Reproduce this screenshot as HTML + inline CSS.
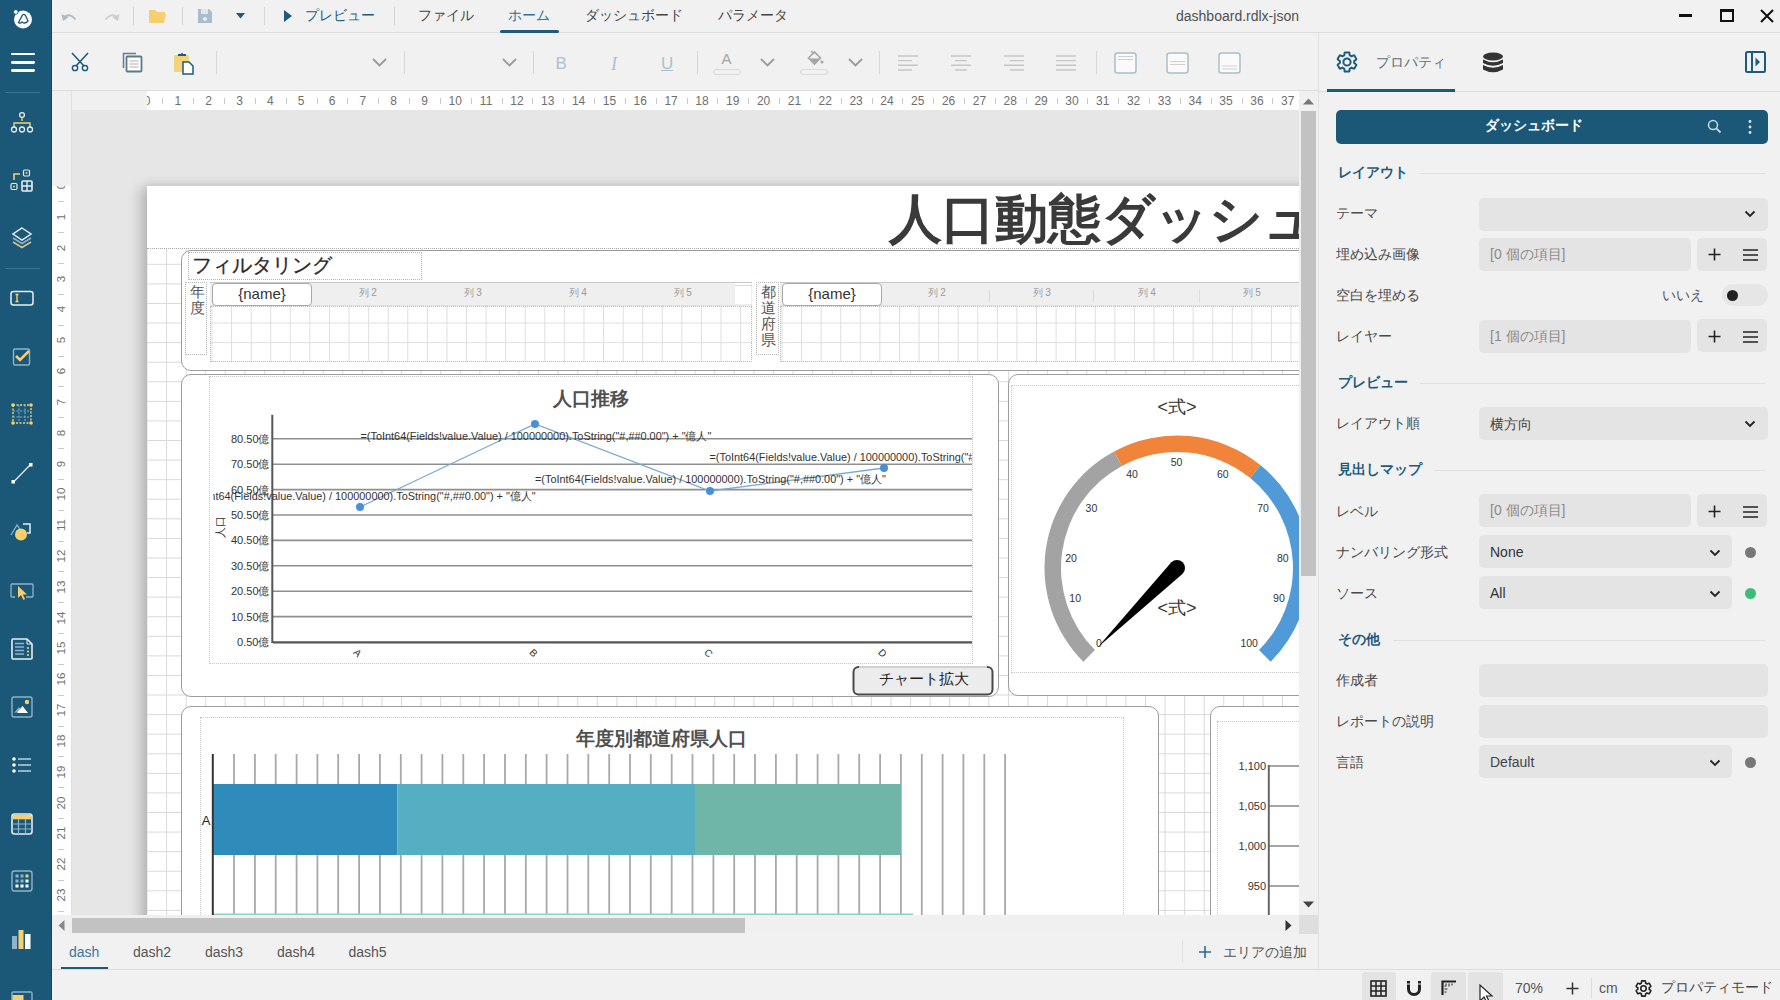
<!DOCTYPE html>
<html><head><meta charset="utf-8">
<style>
*{box-sizing:border-box}
html,body{margin:0;padding:0}
body{width:1780px;height:1000px;position:relative;overflow:hidden;background:#f1f1f1;font-family:"Liberation Sans",sans-serif;color:#444}
.a{position:absolute}
.t{position:absolute;white-space:nowrap;line-height:1}
svg{position:absolute;overflow:visible}
#side{left:0;top:0;width:52px;height:1000px;background:#1b5878}
.sep{position:absolute;width:1px;background:#d6d6d6}
.lbl{position:absolute;left:1336px;font-size:14px;color:#4a4a4a;white-space:nowrap;line-height:1}
.hdr{position:absolute;left:1338px;font-size:15px;font-weight:bold;color:#1d5b7b;white-space:nowrap;line-height:1}
.hline{position:absolute;height:1px;background:#dedede;right:14px}
.inp{position:absolute;left:1479px;height:33px;background:#e4e4e4;border-radius:5px}
.btns{position:absolute;left:1697px;width:70px;height:33px;background:#e4e4e4;border-radius:5px}
.ph{position:absolute;left:11px;top:9px;font-size:14px;color:#8a8a8a;white-space:nowrap;line-height:1}
.val{position:absolute;left:11px;top:10px;font-size:14px;color:#444;white-space:nowrap;line-height:1}
</style></head><body>

<!-- sidebar -->
<div id="side" class="a"></div>
<svg style="left:12px;top:8px" width="22" height="22" viewBox="0 0 22 22"><circle cx="11" cy="11.5" r="9" fill="#fff"/><circle cx="3.8" cy="4" r="2.3" fill="#fff" stroke="#1b5878" stroke-width="0.8"/><path d="M6.5 14.5 L10.5 7 Q12 5.5 13.5 7.5 L16 13 Q13 16.5 10 14 Q8 16 6.5 14.5z" fill="none" stroke="#1b5878" stroke-width="1.3"/></svg>
<div class="a" style="left:11px;top:52.5px;width:23.5px;height:2.8px;background:#fff;border-radius:1.4px"></div>
<div class="a" style="left:11px;top:61px;width:23.5px;height:2.8px;background:#fff;border-radius:1.4px"></div>
<div class="a" style="left:11px;top:69px;width:23.5px;height:2.8px;background:#fff;border-radius:1.4px"></div>
<div class="a" style="left:5.5px;top:91.5px;width:34.5px;height:1px;background:#3f7594"></div>
<div class="a" style="left:5.5px;top:267.5px;width:34.5px;height:1px;background:#3f7594"></div>
<svg style="left:9.0px;top:110.0px" width="26" height="26" viewBox="0 0 26 26"><path d="M13 7.5 V11 M5 17 V13 H21 V17" fill="none" stroke="#f7cf6e" stroke-width="1.4"/><circle cx="13" cy="5" r="2.4" fill="none" stroke="#e8eef2" stroke-width="1.3"/><circle cx="5" cy="19.5" r="2.5" fill="none" stroke="#e8eef2" stroke-width="1.3"/><circle cx="13" cy="19.5" r="2.5" fill="none" stroke="#e8eef2" stroke-width="1.3"/><circle cx="21" cy="19.5" r="2.5" fill="none" stroke="#e8eef2" stroke-width="1.3"/></svg>
<svg style="left:9.0px;top:168.0px" width="26" height="26" viewBox="0 0 26 26"><path d="M5 12 V6 H11" fill="none" stroke="#f7cf6e" stroke-width="1.6"/><rect x="14.5" y="2" width="6" height="6" rx="1.2" fill="none" stroke="#e8eef2" stroke-width="1.2"/><circle cx="17.5" cy="5" r="1" fill="#f7cf6e"/><rect x="2" y="15.5" width="6" height="6" rx="1.2" fill="none" stroke="#e8eef2" stroke-width="1.2"/><circle cx="5" cy="18.5" r="1" fill="#f7cf6e"/><rect x="13" y="13" width="10" height="10" rx="1" fill="none" stroke="#e8eef2" stroke-width="1.6"/><path d="M18 13v10M13 18h10" stroke="#e8eef2" stroke-width="1.4"/></svg>
<svg style="left:9.0px;top:225.0px" width="26" height="26" viewBox="0 0 26 26"><path d="M13 3 L22 9 L13 15 L4 9z" fill="none" stroke="#e8eef2" stroke-width="1.5"/><path d="M4 13 L13 18.5 L22 13" fill="none" stroke="#8fb3c8" stroke-width="1.5"/><path d="M4 17 L13 22.5 L22 17" fill="none" stroke="#d9c489" stroke-width="1.5"/></svg>
<svg style="left:9.0px;top:285.0px" width="26" height="26" viewBox="0 0 26 26"><rect x="2" y="6.5" width="22" height="13.5" rx="2.5" fill="none" stroke="#e8eef2" stroke-width="1.5"/><path d="M6.5 9.5h3M8 9.5v7M6.5 16.5h3" stroke="#f7cf6e" stroke-width="1.4"/></svg>
<svg style="left:9.0px;top:344.0px" width="26" height="26" viewBox="0 0 26 26"><rect x="4.5" y="5" width="16" height="16" rx="1.5" fill="none" stroke="#8fb3c8" stroke-width="1.4"/><path d="M7 12 L11 16 L20 7" fill="none" stroke="#f7cf6e" stroke-width="2.6"/></svg>
<svg style="left:9.0px;top:401.0px" width="26" height="26" viewBox="0 0 26 26"><rect x="4" y="4" width="18" height="18" fill="none" stroke="#f7cf6e" stroke-width="1.4" stroke-dasharray="2 1.5"/><path d="M10 4v18M16 4v18M4 10h18M4 16h18" stroke="#8fb3c8" stroke-width="1" stroke-dasharray="2 1.5"/><circle cx="4" cy="4" r="1.8" fill="#f7cf6e"/><circle cx="22" cy="4" r="1.8" fill="#f7cf6e"/><circle cx="4" cy="22" r="1.8" fill="#f7cf6e"/><circle cx="22" cy="22" r="1.8" fill="#f7cf6e"/></svg>
<svg style="left:9.0px;top:460.0px" width="26" height="26" viewBox="0 0 26 26"><path d="M4.5 22 L21.5 4.5" stroke="#e8eef2" stroke-width="1.2"/><rect x="2.5" y="20" width="3.5" height="3.5" fill="#fff"/><rect x="20" y="3" width="3.5" height="3.5" fill="#fff"/></svg>
<svg style="left:9.0px;top:518.0px" width="26" height="26" viewBox="0 0 26 26"><path d="M2 17 L8 7 L12 13" fill="none" stroke="#8fb3c8" stroke-width="1.3"/><path d="M14 6 H21 V15 H18" fill="none" stroke="#e8eef2" stroke-width="1.5"/><circle cx="12" cy="16.5" r="6" fill="#f7cf6e"/></svg>
<svg style="left:9.0px;top:577.0px" width="26" height="26" viewBox="0 0 26 26"><path d="M6 20 H3 Q2 20 2 19 V8 Q2 7 3 7 H23 Q24 7 24 8 V19 Q24 20 23 20 H17" fill="none" stroke="#8fb3c8" stroke-width="1.3"/><path d="M9 9 V21 L12 18 L14.5 23 L16 22 L13.8 17.5 H18z" fill="#f7cf6e"/></svg>
<svg style="left:9.0px;top:635.5px" width="26" height="26" viewBox="0 0 26 26"><path d="M3 4 Q3 3 4 3 H18 L23 8 V22 Q23 23 22 23 H4 Q3 23 3 22z" fill="none" stroke="#e8eef2" stroke-width="1.6"/><path d="M6 7.5h9M6 11h9M6 14.5h9M6 18h9" stroke="#8fb3c8" stroke-width="1.6"/><circle cx="19" cy="12" r="1.1" fill="#f7cf6e"/><circle cx="19" cy="15.5" r="1.1" fill="#f7cf6e"/><circle cx="19" cy="19" r="1.1" fill="#f7cf6e"/><path d="M18 3 V8 H23" fill="none" stroke="#e8eef2" stroke-width="1"/></svg>
<svg style="left:9.0px;top:693.5px" width="26" height="26" viewBox="0 0 26 26"><rect x="3" y="3" width="20" height="20" rx="2" fill="none" stroke="#8fb3c8" stroke-width="1.4"/><circle cx="18" cy="8" r="2.2" fill="#f7cf6e"/><path d="M5 19 L10 13 L13 17z" fill="#8fb3c8"/><path d="M8 19 L13.5 12 L19 19z" fill="#fff"/></svg>
<svg style="left:9.0px;top:752.0px" width="26" height="26" viewBox="0 0 26 26"><circle cx="5" cy="7" r="1.8" fill="#fff"/><circle cx="5" cy="13" r="1.8" fill="#fff"/><circle cx="5" cy="19" r="1.8" fill="#fff"/><path d="M9 7h13M9 13h13M9 19h13" stroke="#8fb3c8" stroke-width="1.8"/></svg>
<svg style="left:9.0px;top:810.5px" width="26" height="26" viewBox="0 0 26 26"><rect x="3" y="3" width="20" height="20" rx="2.5" fill="none" stroke="#e8eef2" stroke-width="1.6"/><rect x="3.8" y="3.8" width="18.4" height="4.5" fill="#f7cf6e"/><path d="M3 13h20M3 18h20M9.5 8v15M16.5 8v15" stroke="#8fb3c8" stroke-width="1.2"/></svg>
<svg style="left:9.0px;top:868.0px" width="26" height="26" viewBox="0 0 26 26"><rect x="3" y="3" width="20" height="20" rx="2.5" fill="none" stroke="#8fb3c8" stroke-width="1.4"/><g fill="#8fb3c8"><rect x="6.5" y="6.5" width="3" height="3"/><rect x="11.5" y="6.5" width="3" height="3"/><rect x="6.5" y="11.5" width="3" height="3"/><rect x="11.5" y="11.5" width="3" height="3"/></g><rect x="16.5" y="6.5" width="3" height="3" fill="#f7cf6e"/><g fill="#fff"><rect x="16.5" y="11.5" width="3" height="3"/><rect x="6.5" y="16.5" width="3" height="3"/><rect x="11.5" y="16.5" width="3" height="3"/><rect x="16.5" y="16.5" width="3" height="3"/></g></svg>
<svg style="left:9.0px;top:927.0px" width="26" height="26" viewBox="0 0 26 26"><rect x="3" y="9" width="5" height="13" fill="#8fb3c8"/><rect x="9.5" y="3" width="5" height="19" fill="#f7cf6e"/><rect x="16" y="7" width="5.5" height="15" fill="#fff"/></svg>
<svg style="left:9.0px;top:989px" width="26" height="26" viewBox="0 0 26 26"><rect x="3" y="3" width="20" height="20" rx="1" fill="none" stroke="#8fb3c8" stroke-width="1.4"/><rect x="3.5" y="6" width="11" height="10" fill="#f7cf6e"/></svg>
<div class="a" style="left:50.5px;top:0;width:1.5px;height:1000px;background:#1a4760"></div>

<!-- title bar -->
<div class="a" style="left:52px;top:0;width:1728px;height:33px;background:#f1f1f1;border-bottom:1px solid #dcdcdc"></div>

<!-- title bar content -->
<svg style="left:61px;top:11px" width="18" height="12" viewBox="0 0 18 12"><path d="M3.5 6 Q9 1.5 14.5 8.5" fill="none" stroke="#aabbc6" stroke-width="1.8"/><path d="M0.5 3 L2 10 L7.5 6.5Z" fill="#aabbc6"/></svg>
<svg style="left:102px;top:11px" width="18" height="12" viewBox="0 0 18 12"><path d="M14.5 6 Q9 1.5 3.5 8.5" fill="none" stroke="#c4ced5" stroke-width="1.8"/><path d="M17.5 3 L16 10 L10.5 6.5Z" fill="#c4ced5"/></svg>
<div class="sep" style="left:133px;top:7px;height:18px"></div>
<svg style="left:148px;top:8px" width="19" height="16" viewBox="0 0 19 16"><path d="M1 2 h6 l2 2 h8 v2 H1z" fill="#f6cf6f"/><path d="M1 6 h17 l-2 9 H1z" fill="#f6cf6f"/></svg>
<div class="sep" style="left:182px;top:7px;height:18px"></div>
<svg style="left:197px;top:8px" width="16" height="16" viewBox="0 0 16 16"><path d="M1 1 h11 l3 3 v11 H1z" fill="#a9bccb"/><rect x="4" y="1" width="7" height="5" fill="#dfe6ec"/><circle cx="8" cy="11" r="2" fill="#e9eef2"/></svg>
<svg style="left:236px;top:13px" width="9" height="6" viewBox="0 0 9 6"><path d="M0 0 H9 L4.5 5.5z" fill="#1d5b7b"/></svg>
<div class="sep" style="left:264px;top:7px;height:18px"></div>
<svg style="left:283px;top:9px" width="10" height="14" viewBox="0 0 10 14"><path d="M1 1 L9 7 L1 13z" fill="#1d5b7b"/></svg>
<div class="t" style="left:305px;top:7.5px;font-size:14.3px;color:#1d5b7b">プレビュー</div>
<div class="sep" style="left:394px;top:7px;height:18px"></div>
<div class="t" style="left:418px;top:7.5px;font-size:14.3px;color:#444">ファイル</div>
<div class="t" style="left:508px;top:7.5px;font-size:14.3px;color:#2e7396">ホーム</div>
<div class="a" style="left:500px;top:30px;width:59px;height:3px;background:#1d5b7b;border-radius:1.5px"></div>
<div class="t" style="left:585px;top:7.5px;font-size:14.3px;color:#444">ダッシュボード</div>
<div class="t" style="left:718px;top:7.5px;font-size:14.3px;color:#444">パラメータ</div>
<div class="t" style="left:1176px;top:9px;font-size:14px;color:#505050">dashboard.rdlx-json</div>
<div class="a" style="left:1679px;top:14px;width:13px;height:3px;background:#111"></div>
<div class="a" style="left:1720px;top:9px;width:14px;height:13px;border:2px solid #111;border-top-width:3px"></div>
<svg style="left:1760px;top:9px" width="14" height="14" viewBox="0 0 14 14"><path d="M1 1 L13 13 M13 1 L1 13" stroke="#111" stroke-width="2"/></svg>

<!-- toolbar -->
<div class="a" style="left:52px;top:33px;width:1266px;height:58px;background:#f1f1f1;border-bottom:1px solid #dcdcdc"></div>


<!-- toolbar content -->
<svg style="left:70px;top:52px" width="20" height="20" viewBox="0 0 20 20"><path d="M2 1 L14 14 M18 1 L6 14" stroke="#1d5b7b" stroke-width="1.6" fill="none"/><circle cx="5" cy="16" r="2.6" fill="#fff" stroke="#1d5b7b" stroke-width="1.5"/><circle cx="15" cy="16" r="2.6" fill="#fff" stroke="#1d5b7b" stroke-width="1.5"/></svg>
<svg style="left:122px;top:52px" width="22" height="22" viewBox="0 0 22 22"><path d="M1.5 16 V1.5 H14" stroke="#5f7f92" stroke-width="1.5" fill="none"/><rect x="4.5" y="4.5" width="15" height="15" rx="1" fill="#fff" stroke="#5a7a8e" stroke-width="1.8"/><path d="M7.5 9h9M7.5 12h9M7.5 15h9" stroke="#c9c9c9" stroke-width="1.3"/></svg>
<svg style="left:173px;top:51px" width="22" height="24" viewBox="0 0 22 24"><rect x="1" y="4" width="15" height="17" rx="1" fill="#f6d27a"/><path d="M5 5 V3 H8 Q9 0.5 10 3 H13 V5z" fill="#1d5b7b"/><path d="M10 11 H16 L20 15 V23 H10z" fill="#fff" stroke="#1d5b7b" stroke-width="1.5"/></svg>
<div class="sep" style="left:216px;top:51px;height:23px"></div>
<svg style="left:372px;top:58px" width="15" height="9" viewBox="0 0 15 9"><path d="M1 1 L7.5 7.5 L14 1" stroke="#9a9a9a" stroke-width="1.8" fill="none"/></svg>
<div class="sep" style="left:404px;top:51px;height:23px"></div>
<svg style="left:502px;top:58px" width="15" height="9" viewBox="0 0 15 9"><path d="M1 1 L7.5 7.5 L14 1" stroke="#9a9a9a" stroke-width="1.8" fill="none"/></svg>
<div class="sep" style="left:533px;top:51px;height:23px"></div>
<div class="t" style="left:555.5px;top:55px;font-size:17px;color:#a9c3cb;font-family:'Liberation Sans',sans-serif">B</div>
<div class="t" style="left:611px;top:55px;font-size:18px;color:#a9c3cb;font-style:italic;font-family:'Liberation Serif',serif">I</div>
<div class="t" style="left:661px;top:55px;font-size:17px;color:#a9c3cb;text-decoration:underline">U</div>
<div class="sep" style="left:697px;top:51px;height:23px"></div>
<div class="t" style="left:721.5px;top:51px;font-size:15px;color:#a5a5a5">A</div>
<div class="a" style="left:713px;top:69px;width:28px;height:6px;border:1px solid #dadada;border-radius:3px"></div>
<svg style="left:760px;top:58px" width="15" height="9" viewBox="0 0 15 9"><path d="M1 1 L7.5 7.5 L14 1" stroke="#9a9a9a" stroke-width="1.8" fill="none"/></svg>
<svg style="left:806px;top:49px" width="18" height="17" viewBox="0 0 18 17"><path d="M5 2 L8 5" stroke="#a5a5a5" stroke-width="1.4"/><path d="M2.5 9 L8.5 3 L14.5 9 L8.5 15z" fill="none" stroke="#a5a5a5" stroke-width="1.6"/><path d="M3.5 9.5 H13.5 L8.5 14.5z" fill="#a5a5a5"/><circle cx="16" cy="13" r="1.5" fill="#a5a5a5"/></svg>
<div class="a" style="left:800px;top:69px;width:28px;height:6px;border:1px solid #dadada;border-radius:3px"></div>
<svg style="left:848px;top:58px" width="15" height="9" viewBox="0 0 15 9"><path d="M1 1 L7.5 7.5 L14 1" stroke="#9a9a9a" stroke-width="1.8" fill="none"/></svg>
<div class="sep" style="left:879px;top:51px;height:23px"></div>
<svg style="left:897px;top:54px" width="22" height="18" viewBox="0 0 22 18"><path d="M1 2h20M1 6.6h14M1 11.2h20M1 16h14" stroke="#c6c6c6" stroke-width="1.4"/></svg>
<svg style="left:950px;top:54px" width="22" height="18" viewBox="0 0 22 18"><path d="M1 2h20M5 6.6h12M1 11.2h20M5 16h12" stroke="#c6c6c6" stroke-width="1.4"/></svg>
<svg style="left:1003px;top:54px" width="22" height="18" viewBox="0 0 22 18"><path d="M1 2h20M7 6.6h14M1 11.2h20M7 16h14" stroke="#c6c6c6" stroke-width="1.4"/></svg>
<svg style="left:1055px;top:54px" width="22" height="18" viewBox="0 0 22 18"><path d="M1 2h20M1 6.6h20M1 11.2h20M1 16h20" stroke="#c6c6c6" stroke-width="1.4"/></svg>
<div class="sep" style="left:1096px;top:51px;height:23px"></div>
<svg style="left:1114px;top:52px" width="23" height="22" viewBox="0 0 23 22"><rect x="1" y="1" width="21" height="20" rx="2.5" fill="#fafafa" stroke="#a9bfca" stroke-width="1.5"/><path d="M4 4.5h15M4 7.5h15" stroke="#cfcfcf" stroke-width="1.2"/></svg>
<svg style="left:1166px;top:52px" width="23" height="22" viewBox="0 0 23 22"><rect x="1" y="1" width="21" height="20" rx="2.5" fill="#fafafa" stroke="#a9bfca" stroke-width="1.5"/><path d="M4 9.5h15M4 12.5h15" stroke="#cfcfcf" stroke-width="1.2"/></svg>
<svg style="left:1218px;top:52px" width="23" height="22" viewBox="0 0 23 22"><rect x="1" y="1" width="21" height="20" rx="2.5" fill="#fafafa" stroke="#a9bfca" stroke-width="1.5"/><path d="M4 14h15M4 17h15" stroke="#cfcfcf" stroke-width="1.2"/></svg>

<!-- canvas region -->
<div class="a" id="canvas" style="left:52px;top:91px;width:1266px;height:825px;background:#e6e6e6;overflow:hidden"></div>

<!-- page -->
<div class="a" style="left:71px;top:110px;width:1227.5px;height:805px;overflow:hidden">
<div class="a" id="page" style="left:76px;top:76px;width:1400px;height:900px;background-color:#fff;box-shadow:-7px 2px 12px rgba(0,0,0,0.2),0 -3px 8px rgba(0,0,0,0.05);background-image:linear-gradient(to right,#d9d9d9 1px,transparent 1px),linear-gradient(to bottom,#d9d9d9 1px,transparent 1px);background-size:19.58px 19.58px;background-position:-0.5px -0.5px">
<div class="a" style="left:0;top:0;width:1400px;height:62.5px;background:#fff;border-bottom:1px dotted #aaa"></div>
<div class="t" style="left:742px;top:6px;font-size:53px;color:#3a3a3a;font-weight:bold">人口動態ダッシュボード</div>
<div class="a" style="left:33.5px;top:63.8px;width:1300px;height:121.5px;background:#fff;border:1.5px solid #9d9d9d;border-radius:10px"></div>
<div class="a" style="left:41px;top:66px;width:234px;height:28px;border:1px dotted #b5b5b5"></div>
<div class="t" style="left:45px;top:69px;font-size:20px;color:#2a2a2a;font-weight:normal;-webkit-text-stroke:0.3px #2a2a2a">フィルタリング</div>
<div class="a" style="left:38px;top:96px;width:22px;height:73px;border:1px dotted #b5b5b5"></div>
<div class="t" style="left:39px;top:97.5px;width:22px;text-align:center;font-size:15px;color:#555">年</div>
<div class="t" style="left:39px;top:113.5px;width:22px;text-align:center;font-size:15px;color:#555">度</div>
<div class="a" style="left:63px;top:120px;width:542px;height:56px;border:1px dotted #bbb;background-image:linear-gradient(to right,#dedede 1px,transparent 1px),linear-gradient(to bottom,#dedede 1px,transparent 1px);background-size:19.58px 19.58px;background-position:0.5px -4px"></div>
<div class="a" style="left:63px;top:96px;width:525px;height:24px;background:#efefef;border-top:1px solid #c8c8c8;border-bottom:1px solid #e0e0e0"></div><div class="a" style="left:588px;top:96px;width:17px;height:24px;border-top:1px solid #c8c8c8;background-image:linear-gradient(to right,#d9d9d9 1px,transparent 1px),linear-gradient(to bottom,#d9d9d9 1px,transparent 1px);background-size:19.58px 19.58px;background-position:-3px 2px"></div>
<div class="a" style="left:65px;top:97px;width:100px;height:23px;background:#fff;border:1px solid #a8a8a8;border-radius:4px"></div>
<div class="t" style="left:65px;top:100px;width:100px;text-align:center;font-size:15px;color:#333">{name}</div>
<div class="t" style="left:201px;top:102px;width:40px;text-align:center;font-size:10px;color:#9a9a9a">列<span style="margin-left:2px">2</span></div>
<div class="t" style="left:306px;top:102px;width:40px;text-align:center;font-size:10px;color:#9a9a9a">列<span style="margin-left:2px">3</span></div>
<div class="t" style="left:411px;top:102px;width:40px;text-align:center;font-size:10px;color:#9a9a9a">列<span style="margin-left:2px">4</span></div>
<div class="t" style="left:516px;top:102px;width:40px;text-align:center;font-size:10px;color:#9a9a9a">列<span style="margin-left:2px">5</span></div>
<div class="a" style="left:609px;top:96px;width:23px;height:73px;border:1px dotted #b5b5b5"></div>
<div class="t" style="left:610px;top:97.5px;width:23px;text-align:center;font-size:15px;color:#555">都</div>
<div class="t" style="left:610px;top:113.5px;width:23px;text-align:center;font-size:15px;color:#555">道</div>
<div class="t" style="left:610px;top:129.5px;width:23px;text-align:center;font-size:15px;color:#555">府</div>
<div class="t" style="left:610px;top:145.5px;width:23px;text-align:center;font-size:15px;color:#555">県</div>
<div class="a" style="left:633px;top:120px;width:540px;height:56px;border:1px dotted #bbb;background-image:linear-gradient(to right,#dedede 1px,transparent 1px),linear-gradient(to bottom,#dedede 1px,transparent 1px);background-size:19.58px 19.58px;background-position:0.5px -4px"></div>
<div class="a" style="left:633px;top:96px;width:540px;height:24px;background:#efefef;border-top:1px solid #c8c8c8;border-bottom:1px solid #e0e0e0"></div>
<div class="a" style="left:635px;top:97px;width:100px;height:23px;background:#fff;border:1px solid #a8a8a8;border-radius:4px"></div>
<div class="t" style="left:635px;top:100px;width:100px;text-align:center;font-size:15px;color:#333">{name}</div>
<div class="t" style="left:770px;top:102px;width:40px;text-align:center;font-size:10px;color:#9a9a9a">列<span style="margin-left:2px">2</span></div>
<div class="t" style="left:875px;top:102px;width:40px;text-align:center;font-size:10px;color:#9a9a9a">列<span style="margin-left:2px">3</span></div>
<div class="t" style="left:980px;top:102px;width:40px;text-align:center;font-size:10px;color:#9a9a9a">列<span style="margin-left:2px">4</span></div>
<div class="t" style="left:1085px;top:102px;width:40px;text-align:center;font-size:10px;color:#9a9a9a">列<span style="margin-left:2px">5</span></div>
<div class="a" style="left:33.5px;top:188px;width:818.5px;height:323px;background:#fff;border:1.5px solid #9d9d9d;border-radius:10px"></div>
<div class="a" style="left:62px;top:190px;width:764px;height:287.5px;border:1px dotted #c5c5c5"></div>
<div class="a" style="left:860.7px;top:188px;width:400px;height:322px;background:#fff;border:1.5px solid #9d9d9d;border-radius:10px"></div>
<div class="a" style="left:864px;top:198.5px;width:400px;height:288px;border:1px dotted #c5c5c5"></div>
<div class="a" style="left:33.5px;top:520.3px;width:978px;height:300px;background:#fff;border:1.5px solid #9d9d9d;border-radius:10px"></div>
<div class="a" style="left:52.5px;top:530.5px;width:924px;height:300px;border:1px dotted #c5c5c5"></div>
<div class="a" style="left:1062.6px;top:519.5px;width:400px;height:300px;background:#fff;border:1.5px solid #9d9d9d;border-radius:10px"></div>
<div class="a" style="left:1070px;top:535px;width:400px;height:300px;border:1px dotted #c5c5c5"></div>
<div class="a" style="left:842px;top:104px;width:1px;height:12px;background:#dcdcdc"></div>
<div class="a" style="left:946px;top:104px;width:1px;height:12px;background:#dcdcdc"></div>
<div class="a" style="left:1052px;top:104px;width:1px;height:12px;background:#dcdcdc"></div>
<!-- charts -->
<svg class="a" style="left:-147px;top:-186px" width="1780" height="1100" viewBox="0 0 1780 1100" font-family="Liberation Sans, sans-serif">
<text x="591" y="405" text-anchor="middle" font-size="19" font-weight="bold" fill="#505050">人口推移</text>
<line x1="273" y1="438.8" x2="972" y2="438.8" stroke="#8f8f8f" stroke-width="1.6"/>
<text x="269.5" y="442.8" text-anchor="end" font-size="11" fill="#333">80.50億</text>
<line x1="273" y1="464.2" x2="972" y2="464.2" stroke="#8f8f8f" stroke-width="1.6"/>
<text x="269.5" y="468.2" text-anchor="end" font-size="11" fill="#333">70.50億</text>
<line x1="273" y1="489.6" x2="972" y2="489.6" stroke="#8f8f8f" stroke-width="1.6"/>
<text x="269.5" y="493.6" text-anchor="end" font-size="11" fill="#333">60.50億</text>
<line x1="273" y1="515.0" x2="972" y2="515.0" stroke="#8f8f8f" stroke-width="1.6"/>
<text x="269.5" y="519.0" text-anchor="end" font-size="11" fill="#333">50.50億</text>
<line x1="273" y1="540.4" x2="972" y2="540.4" stroke="#8f8f8f" stroke-width="1.6"/>
<text x="269.5" y="544.4" text-anchor="end" font-size="11" fill="#333">40.50億</text>
<line x1="273" y1="565.8" x2="972" y2="565.8" stroke="#8f8f8f" stroke-width="1.6"/>
<text x="269.5" y="569.8" text-anchor="end" font-size="11" fill="#333">30.50億</text>
<line x1="273" y1="591.2" x2="972" y2="591.2" stroke="#8f8f8f" stroke-width="1.6"/>
<text x="269.5" y="595.2" text-anchor="end" font-size="11" fill="#333">20.50億</text>
<line x1="273" y1="616.6" x2="972" y2="616.6" stroke="#8f8f8f" stroke-width="1.6"/>
<text x="269.5" y="620.6" text-anchor="end" font-size="11" fill="#333">10.50億</text>
<line x1="273" y1="642.0" x2="972" y2="642.0" stroke="#8f8f8f" stroke-width="1.6"/>
<text x="269.5" y="646.0" text-anchor="end" font-size="11" fill="#333">0.50億</text>
<line x1="273" y1="642.4" x2="972" y2="642.4" stroke="#555" stroke-width="2"/>
<line x1="272.3" y1="414.8" x2="272.3" y2="643" stroke="#555" stroke-width="2"/>
<text transform="translate(224,527) rotate(-90)" text-anchor="middle" font-size="11" fill="#333">人口</text>
<text transform="translate(357.5,653) rotate(45)" text-anchor="middle" dominant-baseline="central" font-size="10" fill="#333">A</text>
<text transform="translate(533.5,653) rotate(45)" text-anchor="middle" dominant-baseline="central" font-size="10" fill="#333">B</text>
<text transform="translate(708.5,653) rotate(45)" text-anchor="middle" dominant-baseline="central" font-size="10" fill="#333">C</text>
<text transform="translate(882.5,653) rotate(45)" text-anchor="middle" dominant-baseline="central" font-size="10" fill="#333">D</text>
<polyline points="360,507 535,424 710,491 884,468" fill="none" stroke="#7aa8d4" stroke-width="1.3"/>
<circle cx="360" cy="507" r="4" fill="#4a90d9"/>
<circle cx="535" cy="424" r="4" fill="#4a90d9"/>
<circle cx="710" cy="491" r="4" fill="#4a90d9"/>
<circle cx="884" cy="468" r="4" fill="#4a90d9"/>
<defs><clipPath id="lc"><rect x="213" y="376" width="759" height="286"/></clipPath></defs>
<g clip-path="url(#lc)" font-size="10.9" fill="#333">
<text x="360.5" y="440" >=(ToInt64(Fields!value.Value) / 100000000).ToString(&quot;#,##0.00&quot;) + &quot;億人&quot;</text>
<text x="709.5" y="461" >=(ToInt64(Fields!value.Value) / 100000000).ToString(&quot;#,##0.00&quot;) + &quot;億人&quot;</text>
<text x="535" y="483" >=(ToInt64(Fields!value.Value) / 100000000).ToString(&quot;#,##0.00&quot;) + &quot;億人&quot;</text>
<text x="535.7" y="500" text-anchor="end">=(ToInt64(Fields!value.Value) / 100000000).ToString(&quot;#,##0.00&quot;) + &quot;億人&quot;</text>
</g>
<rect x="853.5" y="667" width="139" height="27.5" rx="5" fill="#ececec" stroke="#4a4a4a" stroke-width="2"/><rect x="859" y="666" width="128" height="3" fill="#ececec"/><line x1="859" y1="667" x2="987" y2="667" stroke="#c9c9c9" stroke-width="1.5"/>
<text x="923.5" y="683.5" text-anchor="middle" font-size="15" fill="#222">チャート拡大</text>
<text x="1177" y="413" text-anchor="middle" font-size="18" fill="#333">&lt;式&gt;</text>
<path d="M1083.31,661.69 A132.5,132.5 0 0 1 1114.08,451.39 L1121.92,465.91 A116,116 0 0 0 1094.98,650.02Z" fill="#a3a3a3"/>
<path d="M1114.08,451.39 A132.5,132.5 0 0 1 1260.65,465.25 L1250.24,478.04 A116,116 0 0 0 1121.92,465.91Z" fill="#f0843a"/>
<path d="M1260.65,465.25 A132.5,132.5 0 0 1 1270.69,661.69 L1259.02,650.02 A116,116 0 0 0 1250.24,478.04Z" fill="#519ad8"/>
<text x="1099" y="647.1" text-anchor="middle" font-size="10.5" fill="#333">0</text>
<text x="1075.2" y="601.5" text-anchor="middle" font-size="10.5" fill="#333">10</text>
<text x="1071" y="561.8" text-anchor="middle" font-size="10.5" fill="#333">20</text>
<text x="1091.4" y="512.4" text-anchor="middle" font-size="10.5" fill="#333">30</text>
<text x="1132" y="477.8" text-anchor="middle" font-size="10.5" fill="#333">40</text>
<text x="1176.6" y="465.5" text-anchor="middle" font-size="10.5" fill="#333">50</text>
<text x="1222.8" y="477.8" text-anchor="middle" font-size="10.5" fill="#333">60</text>
<text x="1263" y="512.4" text-anchor="middle" font-size="10.5" fill="#333">70</text>
<text x="1282.8" y="561.8" text-anchor="middle" font-size="10.5" fill="#333">80</text>
<text x="1278.9" y="601.5" text-anchor="middle" font-size="10.5" fill="#333">90</text>
<text x="1249.2" y="647.1" text-anchor="middle" font-size="10.5" fill="#333">100</text>
<path d="M1097.5,647.5 L1171.34,562.34 A8,8 0 0 1 1182.66,573.66 Z" fill="#000"/>
<text x="1177" y="614" text-anchor="middle" font-size="18" fill="#333">&lt;式&gt;</text>
<text x="661" y="745" text-anchor="middle" font-size="19" font-weight="bold" fill="#505050">年度別都道府県人口</text>
<line x1="234.0" y1="754" x2="234.0" y2="915" stroke="#a8a8a8" stroke-width="1.8"/>
<line x1="254.9" y1="754" x2="254.9" y2="915" stroke="#a8a8a8" stroke-width="1.8"/>
<line x1="275.7" y1="754" x2="275.7" y2="915" stroke="#a8a8a8" stroke-width="1.8"/>
<line x1="296.6" y1="754" x2="296.6" y2="915" stroke="#a8a8a8" stroke-width="1.8"/>
<line x1="317.4" y1="754" x2="317.4" y2="915" stroke="#a8a8a8" stroke-width="1.8"/>
<line x1="338.2" y1="754" x2="338.2" y2="915" stroke="#a8a8a8" stroke-width="1.8"/>
<line x1="359.1" y1="754" x2="359.1" y2="915" stroke="#a8a8a8" stroke-width="1.8"/>
<line x1="379.9" y1="754" x2="379.9" y2="915" stroke="#a8a8a8" stroke-width="1.8"/>
<line x1="400.8" y1="754" x2="400.8" y2="915" stroke="#a8a8a8" stroke-width="1.8"/>
<line x1="421.6" y1="754" x2="421.6" y2="915" stroke="#a8a8a8" stroke-width="1.8"/>
<line x1="442.4" y1="754" x2="442.4" y2="915" stroke="#a8a8a8" stroke-width="1.8"/>
<line x1="463.3" y1="754" x2="463.3" y2="915" stroke="#a8a8a8" stroke-width="1.8"/>
<line x1="484.1" y1="754" x2="484.1" y2="915" stroke="#a8a8a8" stroke-width="1.8"/>
<line x1="505.0" y1="754" x2="505.0" y2="915" stroke="#a8a8a8" stroke-width="1.8"/>
<line x1="525.8" y1="754" x2="525.8" y2="915" stroke="#a8a8a8" stroke-width="1.8"/>
<line x1="546.6" y1="754" x2="546.6" y2="915" stroke="#a8a8a8" stroke-width="1.8"/>
<line x1="567.5" y1="754" x2="567.5" y2="915" stroke="#a8a8a8" stroke-width="1.8"/>
<line x1="588.3" y1="754" x2="588.3" y2="915" stroke="#a8a8a8" stroke-width="1.8"/>
<line x1="609.2" y1="754" x2="609.2" y2="915" stroke="#a8a8a8" stroke-width="1.8"/>
<line x1="630.0" y1="754" x2="630.0" y2="915" stroke="#a8a8a8" stroke-width="1.8"/>
<line x1="650.8" y1="754" x2="650.8" y2="915" stroke="#a8a8a8" stroke-width="1.8"/>
<line x1="671.7" y1="754" x2="671.7" y2="915" stroke="#a8a8a8" stroke-width="1.8"/>
<line x1="692.5" y1="754" x2="692.5" y2="915" stroke="#a8a8a8" stroke-width="1.8"/>
<line x1="713.4" y1="754" x2="713.4" y2="915" stroke="#a8a8a8" stroke-width="1.8"/>
<line x1="734.2" y1="754" x2="734.2" y2="915" stroke="#a8a8a8" stroke-width="1.8"/>
<line x1="755.0" y1="754" x2="755.0" y2="915" stroke="#a8a8a8" stroke-width="1.8"/>
<line x1="775.9" y1="754" x2="775.9" y2="915" stroke="#a8a8a8" stroke-width="1.8"/>
<line x1="796.7" y1="754" x2="796.7" y2="915" stroke="#a8a8a8" stroke-width="1.8"/>
<line x1="817.6" y1="754" x2="817.6" y2="915" stroke="#a8a8a8" stroke-width="1.8"/>
<line x1="838.4" y1="754" x2="838.4" y2="915" stroke="#a8a8a8" stroke-width="1.8"/>
<line x1="859.2" y1="754" x2="859.2" y2="915" stroke="#a8a8a8" stroke-width="1.8"/>
<line x1="880.1" y1="754" x2="880.1" y2="915" stroke="#a8a8a8" stroke-width="1.8"/>
<line x1="900.9" y1="754" x2="900.9" y2="915" stroke="#a8a8a8" stroke-width="1.8"/>
<line x1="921.8" y1="754" x2="921.8" y2="915" stroke="#a8a8a8" stroke-width="1.8"/>
<line x1="942.6" y1="754" x2="942.6" y2="915" stroke="#a8a8a8" stroke-width="1.8"/>
<line x1="963.4" y1="754" x2="963.4" y2="915" stroke="#a8a8a8" stroke-width="1.8"/>
<line x1="984.3" y1="754" x2="984.3" y2="915" stroke="#a8a8a8" stroke-width="1.8"/>
<line x1="1005.1" y1="754" x2="1005.1" y2="915" stroke="#a8a8a8" stroke-width="1.8"/>
<rect x="213" y="784" width="184.5" height="71" fill="#2e8bba"/>
<rect x="397.5" y="784" width="297.5" height="71" fill="#55aec2"/>
<rect x="695" y="784" width="205.8" height="71" fill="#6fb5a8"/>
<rect x="213" y="913.5" width="700" height="3" fill="#8fd0c8"/>
<line x1="212.8" y1="754" x2="212.8" y2="915" stroke="#333" stroke-width="2"/>
<text x="206" y="825" text-anchor="middle" font-size="13" fill="#222">A</text>
<text x="1266" y="770" text-anchor="end" font-size="11" fill="#333">1,100</text>
<line x1="1269" y1="766" x2="1300" y2="766" stroke="#8f8f8f" stroke-width="1.6"/>
<text x="1266" y="810" text-anchor="end" font-size="11" fill="#333">1,050</text>
<line x1="1269" y1="806" x2="1300" y2="806" stroke="#8f8f8f" stroke-width="1.6"/>
<text x="1266" y="850" text-anchor="end" font-size="11" fill="#333">1,000</text>
<line x1="1269" y1="846" x2="1300" y2="846" stroke="#8f8f8f" stroke-width="1.6"/>
<text x="1266" y="890" text-anchor="end" font-size="11" fill="#333">950</text>
<line x1="1269" y1="886" x2="1300" y2="886" stroke="#8f8f8f" stroke-width="1.6"/>
<line x1="1268.8" y1="765" x2="1268.8" y2="915" stroke="#666" stroke-width="2"/>
</svg>

</div></div>
<!-- rulers -->
<div class="a" style="left:52px;top:91px;width:1246px;height:19px;background:#f0f0f0"></div>
<div class="a" style="left:71px;top:91px;width:1px;height:824px;background:#e0e0e0"></div><div class="a" style="left:52px;top:109.5px;width:19px;height:1px;background:#e0e0e0"></div>
<div class="a" style="left:52px;top:110px;width:19px;height:805px;background:#f0f0f0"></div>
<div class="a" style="left:147px;top:91px;width:1151.5px;height:19px;background:#fff;overflow:hidden" id="hr">
<div class="t" style="left:-10.0px;top:4px;width:20px;text-align:center;font-size:12px;color:#6f6f6f">0</div>
<div class="a" style="left:15.4px;top:7px;width:1px;height:6px;background:#c9c9c9"></div>
<div class="t" style="left:20.8px;top:4px;width:20px;text-align:center;font-size:12px;color:#6f6f6f">1</div>
<div class="a" style="left:46.2px;top:7px;width:1px;height:6px;background:#c9c9c9"></div>
<div class="t" style="left:51.7px;top:4px;width:20px;text-align:center;font-size:12px;color:#6f6f6f">2</div>
<div class="a" style="left:77.1px;top:7px;width:1px;height:6px;background:#c9c9c9"></div>
<div class="t" style="left:82.5px;top:4px;width:20px;text-align:center;font-size:12px;color:#6f6f6f">3</div>
<div class="a" style="left:107.9px;top:7px;width:1px;height:6px;background:#c9c9c9"></div>
<div class="t" style="left:113.3px;top:4px;width:20px;text-align:center;font-size:12px;color:#6f6f6f">4</div>
<div class="a" style="left:138.7px;top:7px;width:1px;height:6px;background:#c9c9c9"></div>
<div class="t" style="left:144.1px;top:4px;width:20px;text-align:center;font-size:12px;color:#6f6f6f">5</div>
<div class="a" style="left:169.6px;top:7px;width:1px;height:6px;background:#c9c9c9"></div>
<div class="t" style="left:175.0px;top:4px;width:20px;text-align:center;font-size:12px;color:#6f6f6f">6</div>
<div class="a" style="left:200.4px;top:7px;width:1px;height:6px;background:#c9c9c9"></div>
<div class="t" style="left:205.8px;top:4px;width:20px;text-align:center;font-size:12px;color:#6f6f6f">7</div>
<div class="a" style="left:231.2px;top:7px;width:1px;height:6px;background:#c9c9c9"></div>
<div class="t" style="left:236.6px;top:4px;width:20px;text-align:center;font-size:12px;color:#6f6f6f">8</div>
<div class="a" style="left:262.1px;top:7px;width:1px;height:6px;background:#c9c9c9"></div>
<div class="t" style="left:267.5px;top:4px;width:20px;text-align:center;font-size:12px;color:#6f6f6f">9</div>
<div class="a" style="left:292.9px;top:7px;width:1px;height:6px;background:#c9c9c9"></div>
<div class="t" style="left:298.3px;top:4px;width:20px;text-align:center;font-size:12px;color:#6f6f6f">10</div>
<div class="a" style="left:323.7px;top:7px;width:1px;height:6px;background:#c9c9c9"></div>
<div class="t" style="left:329.1px;top:4px;width:20px;text-align:center;font-size:12px;color:#6f6f6f">11</div>
<div class="a" style="left:354.5px;top:7px;width:1px;height:6px;background:#c9c9c9"></div>
<div class="t" style="left:360.0px;top:4px;width:20px;text-align:center;font-size:12px;color:#6f6f6f">12</div>
<div class="a" style="left:385.4px;top:7px;width:1px;height:6px;background:#c9c9c9"></div>
<div class="t" style="left:390.8px;top:4px;width:20px;text-align:center;font-size:12px;color:#6f6f6f">13</div>
<div class="a" style="left:416.2px;top:7px;width:1px;height:6px;background:#c9c9c9"></div>
<div class="t" style="left:421.6px;top:4px;width:20px;text-align:center;font-size:12px;color:#6f6f6f">14</div>
<div class="a" style="left:447.0px;top:7px;width:1px;height:6px;background:#c9c9c9"></div>
<div class="t" style="left:452.4px;top:4px;width:20px;text-align:center;font-size:12px;color:#6f6f6f">15</div>
<div class="a" style="left:477.9px;top:7px;width:1px;height:6px;background:#c9c9c9"></div>
<div class="t" style="left:483.3px;top:4px;width:20px;text-align:center;font-size:12px;color:#6f6f6f">16</div>
<div class="a" style="left:508.7px;top:7px;width:1px;height:6px;background:#c9c9c9"></div>
<div class="t" style="left:514.1px;top:4px;width:20px;text-align:center;font-size:12px;color:#6f6f6f">17</div>
<div class="a" style="left:539.5px;top:7px;width:1px;height:6px;background:#c9c9c9"></div>
<div class="t" style="left:544.9px;top:4px;width:20px;text-align:center;font-size:12px;color:#6f6f6f">18</div>
<div class="a" style="left:570.4px;top:7px;width:1px;height:6px;background:#c9c9c9"></div>
<div class="t" style="left:575.8px;top:4px;width:20px;text-align:center;font-size:12px;color:#6f6f6f">19</div>
<div class="a" style="left:601.2px;top:7px;width:1px;height:6px;background:#c9c9c9"></div>
<div class="t" style="left:606.6px;top:4px;width:20px;text-align:center;font-size:12px;color:#6f6f6f">20</div>
<div class="a" style="left:632.0px;top:7px;width:1px;height:6px;background:#c9c9c9"></div>
<div class="t" style="left:637.4px;top:4px;width:20px;text-align:center;font-size:12px;color:#6f6f6f">21</div>
<div class="a" style="left:662.8px;top:7px;width:1px;height:6px;background:#c9c9c9"></div>
<div class="t" style="left:668.3px;top:4px;width:20px;text-align:center;font-size:12px;color:#6f6f6f">22</div>
<div class="a" style="left:693.7px;top:7px;width:1px;height:6px;background:#c9c9c9"></div>
<div class="t" style="left:699.1px;top:4px;width:20px;text-align:center;font-size:12px;color:#6f6f6f">23</div>
<div class="a" style="left:724.5px;top:7px;width:1px;height:6px;background:#c9c9c9"></div>
<div class="t" style="left:729.9px;top:4px;width:20px;text-align:center;font-size:12px;color:#6f6f6f">24</div>
<div class="a" style="left:755.3px;top:7px;width:1px;height:6px;background:#c9c9c9"></div>
<div class="t" style="left:760.8px;top:4px;width:20px;text-align:center;font-size:12px;color:#6f6f6f">25</div>
<div class="a" style="left:786.2px;top:7px;width:1px;height:6px;background:#c9c9c9"></div>
<div class="t" style="left:791.6px;top:4px;width:20px;text-align:center;font-size:12px;color:#6f6f6f">26</div>
<div class="a" style="left:817.0px;top:7px;width:1px;height:6px;background:#c9c9c9"></div>
<div class="t" style="left:822.4px;top:4px;width:20px;text-align:center;font-size:12px;color:#6f6f6f">27</div>
<div class="a" style="left:847.8px;top:7px;width:1px;height:6px;background:#c9c9c9"></div>
<div class="t" style="left:853.2px;top:4px;width:20px;text-align:center;font-size:12px;color:#6f6f6f">28</div>
<div class="a" style="left:878.7px;top:7px;width:1px;height:6px;background:#c9c9c9"></div>
<div class="t" style="left:884.1px;top:4px;width:20px;text-align:center;font-size:12px;color:#6f6f6f">29</div>
<div class="a" style="left:909.5px;top:7px;width:1px;height:6px;background:#c9c9c9"></div>
<div class="t" style="left:914.9px;top:4px;width:20px;text-align:center;font-size:12px;color:#6f6f6f">30</div>
<div class="a" style="left:940.3px;top:7px;width:1px;height:6px;background:#c9c9c9"></div>
<div class="t" style="left:945.7px;top:4px;width:20px;text-align:center;font-size:12px;color:#6f6f6f">31</div>
<div class="a" style="left:971.1px;top:7px;width:1px;height:6px;background:#c9c9c9"></div>
<div class="t" style="left:976.6px;top:4px;width:20px;text-align:center;font-size:12px;color:#6f6f6f">32</div>
<div class="a" style="left:1002.0px;top:7px;width:1px;height:6px;background:#c9c9c9"></div>
<div class="t" style="left:1007.4px;top:4px;width:20px;text-align:center;font-size:12px;color:#6f6f6f">33</div>
<div class="a" style="left:1032.8px;top:7px;width:1px;height:6px;background:#c9c9c9"></div>
<div class="t" style="left:1038.2px;top:4px;width:20px;text-align:center;font-size:12px;color:#6f6f6f">34</div>
<div class="a" style="left:1063.6px;top:7px;width:1px;height:6px;background:#c9c9c9"></div>
<div class="t" style="left:1069.0px;top:4px;width:20px;text-align:center;font-size:12px;color:#6f6f6f">35</div>
<div class="a" style="left:1094.5px;top:7px;width:1px;height:6px;background:#c9c9c9"></div>
<div class="t" style="left:1099.9px;top:4px;width:20px;text-align:center;font-size:12px;color:#6f6f6f">36</div>
<div class="a" style="left:1125.3px;top:7px;width:1px;height:6px;background:#c9c9c9"></div>
<div class="t" style="left:1130.7px;top:4px;width:20px;text-align:center;font-size:12px;color:#6f6f6f">37</div>
<div class="a" style="left:1156.1px;top:7px;width:1px;height:6px;background:#c9c9c9"></div>
</div>
<div class="a" style="left:52px;top:186px;width:19px;height:729px;background:#fff;overflow:hidden" id="vr">
<div class="t" style="left:0px;top:-6.0px;width:20px;height:12px;text-align:center;font-size:11.5px;color:#6f6f6f;transform:rotate(-90deg)">0</div>
<div class="a" style="left:6px;top:15.4px;width:6px;height:1px;background:#c9c9c9"></div>
<div class="t" style="left:0px;top:24.8px;width:20px;height:12px;text-align:center;font-size:11.5px;color:#6f6f6f;transform:rotate(-90deg)">1</div>
<div class="a" style="left:6px;top:46.2px;width:6px;height:1px;background:#c9c9c9"></div>
<div class="t" style="left:0px;top:55.7px;width:20px;height:12px;text-align:center;font-size:11.5px;color:#6f6f6f;transform:rotate(-90deg)">2</div>
<div class="a" style="left:6px;top:77.1px;width:6px;height:1px;background:#c9c9c9"></div>
<div class="t" style="left:0px;top:86.5px;width:20px;height:12px;text-align:center;font-size:11.5px;color:#6f6f6f;transform:rotate(-90deg)">3</div>
<div class="a" style="left:6px;top:107.9px;width:6px;height:1px;background:#c9c9c9"></div>
<div class="t" style="left:0px;top:117.3px;width:20px;height:12px;text-align:center;font-size:11.5px;color:#6f6f6f;transform:rotate(-90deg)">4</div>
<div class="a" style="left:6px;top:138.7px;width:6px;height:1px;background:#c9c9c9"></div>
<div class="t" style="left:0px;top:148.1px;width:20px;height:12px;text-align:center;font-size:11.5px;color:#6f6f6f;transform:rotate(-90deg)">5</div>
<div class="a" style="left:6px;top:169.6px;width:6px;height:1px;background:#c9c9c9"></div>
<div class="t" style="left:0px;top:179.0px;width:20px;height:12px;text-align:center;font-size:11.5px;color:#6f6f6f;transform:rotate(-90deg)">6</div>
<div class="a" style="left:6px;top:200.4px;width:6px;height:1px;background:#c9c9c9"></div>
<div class="t" style="left:0px;top:209.8px;width:20px;height:12px;text-align:center;font-size:11.5px;color:#6f6f6f;transform:rotate(-90deg)">7</div>
<div class="a" style="left:6px;top:231.2px;width:6px;height:1px;background:#c9c9c9"></div>
<div class="t" style="left:0px;top:240.6px;width:20px;height:12px;text-align:center;font-size:11.5px;color:#6f6f6f;transform:rotate(-90deg)">8</div>
<div class="a" style="left:6px;top:262.1px;width:6px;height:1px;background:#c9c9c9"></div>
<div class="t" style="left:0px;top:271.5px;width:20px;height:12px;text-align:center;font-size:11.5px;color:#6f6f6f;transform:rotate(-90deg)">9</div>
<div class="a" style="left:6px;top:292.9px;width:6px;height:1px;background:#c9c9c9"></div>
<div class="t" style="left:0px;top:302.3px;width:20px;height:12px;text-align:center;font-size:11.5px;color:#6f6f6f;transform:rotate(-90deg)">10</div>
<div class="a" style="left:6px;top:323.7px;width:6px;height:1px;background:#c9c9c9"></div>
<div class="t" style="left:0px;top:333.1px;width:20px;height:12px;text-align:center;font-size:11.5px;color:#6f6f6f;transform:rotate(-90deg)">11</div>
<div class="a" style="left:6px;top:354.5px;width:6px;height:1px;background:#c9c9c9"></div>
<div class="t" style="left:0px;top:364.0px;width:20px;height:12px;text-align:center;font-size:11.5px;color:#6f6f6f;transform:rotate(-90deg)">12</div>
<div class="a" style="left:6px;top:385.4px;width:6px;height:1px;background:#c9c9c9"></div>
<div class="t" style="left:0px;top:394.8px;width:20px;height:12px;text-align:center;font-size:11.5px;color:#6f6f6f;transform:rotate(-90deg)">13</div>
<div class="a" style="left:6px;top:416.2px;width:6px;height:1px;background:#c9c9c9"></div>
<div class="t" style="left:0px;top:425.6px;width:20px;height:12px;text-align:center;font-size:11.5px;color:#6f6f6f;transform:rotate(-90deg)">14</div>
<div class="a" style="left:6px;top:447.0px;width:6px;height:1px;background:#c9c9c9"></div>
<div class="t" style="left:0px;top:456.4px;width:20px;height:12px;text-align:center;font-size:11.5px;color:#6f6f6f;transform:rotate(-90deg)">15</div>
<div class="a" style="left:6px;top:477.9px;width:6px;height:1px;background:#c9c9c9"></div>
<div class="t" style="left:0px;top:487.3px;width:20px;height:12px;text-align:center;font-size:11.5px;color:#6f6f6f;transform:rotate(-90deg)">16</div>
<div class="a" style="left:6px;top:508.7px;width:6px;height:1px;background:#c9c9c9"></div>
<div class="t" style="left:0px;top:518.1px;width:20px;height:12px;text-align:center;font-size:11.5px;color:#6f6f6f;transform:rotate(-90deg)">17</div>
<div class="a" style="left:6px;top:539.5px;width:6px;height:1px;background:#c9c9c9"></div>
<div class="t" style="left:0px;top:548.9px;width:20px;height:12px;text-align:center;font-size:11.5px;color:#6f6f6f;transform:rotate(-90deg)">18</div>
<div class="a" style="left:6px;top:570.4px;width:6px;height:1px;background:#c9c9c9"></div>
<div class="t" style="left:0px;top:579.8px;width:20px;height:12px;text-align:center;font-size:11.5px;color:#6f6f6f;transform:rotate(-90deg)">19</div>
<div class="a" style="left:6px;top:601.2px;width:6px;height:1px;background:#c9c9c9"></div>
<div class="t" style="left:0px;top:610.6px;width:20px;height:12px;text-align:center;font-size:11.5px;color:#6f6f6f;transform:rotate(-90deg)">20</div>
<div class="a" style="left:6px;top:632.0px;width:6px;height:1px;background:#c9c9c9"></div>
<div class="t" style="left:0px;top:641.4px;width:20px;height:12px;text-align:center;font-size:11.5px;color:#6f6f6f;transform:rotate(-90deg)">21</div>
<div class="a" style="left:6px;top:662.8px;width:6px;height:1px;background:#c9c9c9"></div>
<div class="t" style="left:0px;top:672.3px;width:20px;height:12px;text-align:center;font-size:11.5px;color:#6f6f6f;transform:rotate(-90deg)">22</div>
<div class="a" style="left:6px;top:693.7px;width:6px;height:1px;background:#c9c9c9"></div>
<div class="t" style="left:0px;top:703.1px;width:20px;height:12px;text-align:center;font-size:11.5px;color:#6f6f6f;transform:rotate(-90deg)">23</div>
<div class="a" style="left:6px;top:724.5px;width:6px;height:1px;background:#c9c9c9"></div>
<div class="t" style="left:0px;top:733.9px;width:20px;height:12px;text-align:center;font-size:11.5px;color:#6f6f6f;transform:rotate(-90deg)">24</div>
<div class="a" style="left:6px;top:755.3px;width:6px;height:1px;background:#c9c9c9"></div>
</div>
<div class="a" style="left:1298.5px;top:91px;width:19.5px;height:824px;background:#f0f0f0"></div>
<svg style="left:1303px;top:98px" width="11" height="7" viewBox="0 0 11 7"><path d="M0 6.5 L5.5 0.5 L11 6.5z" fill="#777"/></svg>
<div class="a" style="left:1300.5px;top:111px;width:15.5px;height:465px;background:#c2c2c2"></div>
<svg style="left:1303px;top:901px" width="11" height="7" viewBox="0 0 11 7"><path d="M0 0.5 L5.5 6.5 L11 0.5z" fill="#444"/></svg>
<div class="a" style="left:52px;top:915px;width:1246.5px;height:20px;background:#f0f0f0"></div>
<svg style="left:58px;top:920px" width="7" height="11" viewBox="0 0 7 11"><path d="M6.5 0 L0.5 5.5 L6.5 11z" fill="#888"/></svg>
<div class="a" style="left:72px;top:918px;width:673px;height:14.5px;background:#c2c2c2"></div>
<svg style="left:1285px;top:920px" width="7" height="11" viewBox="0 0 7 11"><path d="M0.5 0 L6.5 5.5 L0.5 11z" fill="#333"/></svg>
<div class="a" style="left:1298.5px;top:915px;width:19.5px;height:20px;background:#dedede"></div>
<!-- right panel -->
<div class="a" style="left:1318px;top:33px;width:462px;height:937px;background:#f1f1f1;border-left:1px solid #e2e2e2"></div>

<!-- right panel content -->
<div class="a" style="left:1318px;top:91px;width:462px;height:1px;background:#dcdcdc"></div>
<div class="a" style="left:1327px;top:88.5px;width:128px;height:3px;background:#1d5b7b"></div>
<svg style="left:1335px;top:50px" width="24" height="24" viewBox="0 0 24 24"><path fill="none" stroke="#1d5b7b" stroke-width="2" d="M19.14 12.94c.04-.3.06-.61.06-.94s-.02-.64-.07-.94l2.03-1.58a.49.49 0 0 0 .12-.61l-1.92-3.32a.49.49 0 0 0-.59-.22l-2.39.96c-.5-.38-1.03-.7-1.62-.94l-.36-2.54a.48.48 0 0 0-.48-.41h-3.84c-.24 0-.43.17-.47.41l-.36 2.54c-.59.24-1.13.57-1.62.94l-2.39-.96a.48.48 0 0 0-.59.22L2.74 8.87a.47.47 0 0 0 .12.61l2.03 1.58c-.05.3-.09.63-.09.94s.02.64.07.94l-2.03 1.58a.49.49 0 0 0-.12.61l1.92 3.32c.12.22.37.29.59.22l2.39-.96c.5.38 1.03.7 1.62.94l.36 2.54c.05.24.24.41.48.41h3.84c.24 0 .44-.17.47-.41l.36-2.54c.59-.24 1.13-.56 1.62-.94l2.39.96c.22.08.47 0 .59-.22l1.92-3.32c.12-.22.07-.47-.12-.61l-2.01-1.58z"/><circle cx="12" cy="12" r="3.6" fill="none" stroke="#1d5b7b" stroke-width="2"/></svg>
<div class="t" style="left:1376px;top:55px;font-size:14px;color:#5b6f7b">プロパティ</div>
<svg style="left:1482px;top:52px" width="22" height="23" viewBox="0 0 22 23"><ellipse cx="11" cy="4.5" rx="10" ry="4" fill="#333"/><path d="M1 7.5 Q11 13 21 7.5 V11 Q11 16.5 1 11z" fill="#333"/><path d="M1 13 Q11 18.5 21 13 V17.5 Q11 23 1 17.5z" fill="#333"/></svg>
<svg style="left:1745px;top:51px" width="21" height="22" viewBox="0 0 21 22"><rect x="1" y="1" width="19" height="20" rx="1.5" fill="none" stroke="#1d5b7b" stroke-width="2"/><path d="M7 1 V21" stroke="#1d5b7b" stroke-width="2"/><path d="M10.5 6.5 L15 11 L10.5 15.5z" fill="#1d5b7b"/></svg>
<div class="a" style="left:1336px;top:110px;width:431.5px;height:33.5px;background:#1b5878;border-radius:5px"></div>
<div class="t" style="left:1336px;top:118px;width:395px;text-align:center;font-size:14px;font-weight:bold;color:#fff">ダッシュボード</div>
<svg style="left:1707px;top:119px" width="15" height="15" viewBox="0 0 15 15"><circle cx="6" cy="6" r="4.5" fill="none" stroke="#c9d6de" stroke-width="1.5"/><path d="M9.3 9.3 L13.5 13.5" stroke="#c9d6de" stroke-width="1.8"/></svg>
<svg style="left:1747px;top:119px" width="6" height="16" viewBox="0 0 6 16"><circle cx="3" cy="2.5" r="1.4" fill="#e0e8ec"/><circle cx="3" cy="8" r="1.4" fill="#e0e8ec"/><circle cx="3" cy="13.5" r="1.4" fill="#e0e8ec"/></svg>
<div class="hdr" style="top:164.5px;font-size:14px">レイアウト</div>
<div class="a" style="left:1419.5px;top:172.5px;width:345.5px;height:1px;background:#e0e0e0"></div>
<div class="lbl" style="top:206.0px">テーマ</div>
<div class="inp" style="top:197.5px;width:288.5px"></div>
<svg style="left:1744px;top:210.0px" width="12" height="8" viewBox="0 0 12 8"><path d="M1.5 1.5 L6 6 L10.5 1.5" fill="none" stroke="#222" stroke-width="1.8"/></svg>
<div class="lbl" style="top:247.0px">埋め込み画像</div>
<div class="inp" style="top:237.5px;width:211.5px"><div class="ph">[0 個の項目]</div></div>
<div class="btns" style="top:237.5px"></div>
<svg style="left:1708px;top:248.0px" width="13" height="13" viewBox="0 0 13 13"><path d="M6.5 0.5 V12.5 M0.5 6.5 H12.5" stroke="#222" stroke-width="1.6"/></svg>
<svg style="left:1743px;top:249.0px" width="15" height="12" viewBox="0 0 15 12"><path d="M0 1 H15 M0 6 H15 M0 11 H15" stroke="#222" stroke-width="1.7"/></svg>
<div class="lbl" style="top:287.5px">空白を埋める</div>
<div class="t" style="left:1662px;top:287.5px;font-size:14px;color:#555">いいえ</div>
<div class="a" style="left:1722px;top:284px;width:45.5px;height:22px;background:#e6e6e6;border-radius:11px"></div>
<div class="a" style="left:1726.5px;top:289.5px;width:11px;height:11px;background:#222;border-radius:50%"></div>
<div class="lbl" style="top:328.5px">レイヤー</div>
<div class="inp" style="top:319.5px;width:211.5px"><div class="ph">[1 個の項目]</div></div>
<div class="btns" style="top:319px"></div>
<svg style="left:1708px;top:329.5px" width="13" height="13" viewBox="0 0 13 13"><path d="M6.5 0.5 V12.5 M0.5 6.5 H12.5" stroke="#222" stroke-width="1.6"/></svg>
<svg style="left:1743px;top:330.5px" width="15" height="12" viewBox="0 0 15 12"><path d="M0 1 H15 M0 6 H15 M0 11 H15" stroke="#222" stroke-width="1.7"/></svg>
<div class="hdr" style="top:374.5px;font-size:14px">プレビュー</div>
<div class="a" style="left:1419.5px;top:382.5px;width:345.5px;height:1px;background:#e0e0e0"></div>
<div class="lbl" style="top:416.0px">レイアウト順</div>
<div class="inp" style="top:407px;width:288.5px"><div class="val">横方向</div></div>
<svg style="left:1744px;top:420.0px" width="12" height="8" viewBox="0 0 12 8"><path d="M1.5 1.5 L6 6 L10.5 1.5" fill="none" stroke="#222" stroke-width="1.8"/></svg>
<div class="hdr" style="top:462px;font-size:14px">見出しマップ</div>
<div class="a" style="left:1433.5px;top:470px;width:331.5px;height:1px;background:#e0e0e0"></div>
<div class="lbl" style="top:503.5px">レベル</div>
<div class="inp" style="top:494px;width:211.5px"><div class="ph">[0 個の項目]</div></div>
<div class="btns" style="top:494px"></div>
<svg style="left:1708px;top:504.5px" width="13" height="13" viewBox="0 0 13 13"><path d="M6.5 0.5 V12.5 M0.5 6.5 H12.5" stroke="#222" stroke-width="1.6"/></svg>
<svg style="left:1743px;top:505.5px" width="15" height="12" viewBox="0 0 15 12"><path d="M0 1 H15 M0 6 H15 M0 11 H15" stroke="#222" stroke-width="1.7"/></svg>
<div class="lbl" style="top:544.5px">ナンバリング形式</div>
<div class="inp" style="top:535px;width:253px"><div class="val" style="color:#333">None</div></div>
<svg style="left:1708.5px;top:548.5px" width="12" height="8" viewBox="0 0 12 8"><path d="M1.5 1.5 L6 6 L10.5 1.5" fill="none" stroke="#222" stroke-width="1.8"/></svg>
<div class="a" style="left:1744.5px;top:546.5px;width:11px;height:11px;background:#777;border-radius:50%"></div>
<div class="lbl" style="top:585.5px">ソース</div>
<div class="inp" style="top:576px;width:253px"><div class="val" style="color:#333">All</div></div>
<svg style="left:1708.5px;top:589.5px" width="12" height="8" viewBox="0 0 12 8"><path d="M1.5 1.5 L6 6 L10.5 1.5" fill="none" stroke="#222" stroke-width="1.8"/></svg>
<div class="a" style="left:1744.5px;top:587.5px;width:11px;height:11px;background:#3dbb78;border-radius:50%"></div>
<div class="hdr" style="top:631.5px;font-size:14px">その他</div>
<div class="a" style="left:1392.5px;top:639.5px;width:372.5px;height:1px;background:#e0e0e0"></div>
<div class="lbl" style="top:672.5px">作成者</div>
<div class="inp" style="top:663.5px;width:288.5px"></div>
<div class="lbl" style="top:713.5px">レポートの説明</div>
<div class="inp" style="top:704.5px;width:288.5px"></div>
<div class="lbl" style="top:754.5px">言語</div>
<div class="inp" style="top:745px;width:253px"><div class="val">Default</div></div>
<svg style="left:1708.5px;top:758.5px" width="12" height="8" viewBox="0 0 12 8"><path d="M1.5 1.5 L6 6 L10.5 1.5" fill="none" stroke="#222" stroke-width="1.8"/></svg>
<div class="a" style="left:1744.5px;top:756.5px;width:11px;height:11px;background:#777;border-radius:50%"></div>
<!-- bottom tabs / status -->
<div class="a" style="left:52px;top:934px;width:1266px;height:36px;background:#f1f1f1;border-bottom:1px solid #dcdcdc"></div>
<div class="a" style="left:52px;top:969px;width:1728px;height:1px;background:#dcdcdc"></div>

<!-- tabs content -->
<div class="t" style="left:69px;top:944.5px;font-size:14px;color:#3d7799">dash</div>
<div class="a" style="left:61px;top:966.5px;width:46.5px;height:2.5px;background:#1d5b7b"></div>
<div class="t" style="left:133px;top:944.5px;font-size:14px;color:#555">dash2</div>
<div class="t" style="left:205px;top:944.5px;font-size:14px;color:#555">dash3</div>
<div class="t" style="left:277px;top:944.5px;font-size:14px;color:#555">dash4</div>
<div class="t" style="left:348.5px;top:944.5px;font-size:14px;color:#555">dash5</div>
<div class="sep" style="left:1181.5px;top:941px;height:21px;background:#e0e0e0"></div>
<svg style="left:1199px;top:946px" width="12" height="12" viewBox="0 0 12 12"><path d="M6 0 V12 M0 6 H12" stroke="#2a6a8c" stroke-width="1.6"/></svg>
<div class="t" style="left:1223px;top:944.5px;font-size:14px;color:#555">エリアの追加</div>
<div class="a" style="left:1362px;top:971.5px;width:34px;height:28.5px;background:#e3e3e3;border-radius:3px 3px 0 0"></div>
<svg style="left:1370px;top:980px" width="17" height="17" viewBox="0 0 17 17"><rect x="1" y="1" width="15" height="15" fill="none" stroke="#222" stroke-width="1.6"/><path d="M6 1V16M11 1V16M1 6H16M1 11H16" stroke="#222" stroke-width="1.5"/></svg>
<svg style="left:1406px;top:980px" width="16" height="17" viewBox="0 0 16 17"><path d="M2.5 1 V9 A5.5 5.5 0 0 0 13.5 9 V1" fill="none" stroke="#222" stroke-width="3"/><path d="M0 4h5M11 4h5" stroke="#f1f1f1" stroke-width="1.2"/></svg>
<div class="a" style="left:1431px;top:971.5px;width:35px;height:28.5px;background:#e3e3e3;border-radius:3px 3px 0 0"></div>
<svg style="left:1441px;top:980px" width="16" height="16" viewBox="0 0 16 16"><path d="M1.5 15 V1.5 H15" fill="none" stroke="#222" stroke-width="2.2"/><path d="M5 3.5v2M8 3.5v3M11 3.5v2M3.5 6h2M3.5 9h3M3.5 12h2" stroke="#222" stroke-width="1"/></svg>
<div class="a" style="left:1467.5px;top:971.5px;width:35px;height:28.5px;background:#e3e3e3;border-radius:3px 3px 0 0"></div>
<svg style="left:1479px;top:983.5px" width="15" height="19" viewBox="0 0 15 19"><path d="M1 1 V17 L5 13 L8 19 L10.5 18 L7.5 12 H13z" fill="#fff" stroke="#222" stroke-width="1.2"/></svg>
<div class="t" style="left:1515px;top:981px;font-size:14px;color:#555">70%</div>
<svg style="left:1566px;top:982px" width="13" height="13" viewBox="0 0 13 13"><path d="M6.5 0.5 V12.5 M0.5 6.5 H12.5" stroke="#333" stroke-width="1.5"/></svg>
<div class="sep" style="left:1590.5px;top:978px;height:20px;background:#dcdcdc"></div>
<div class="t" style="left:1599px;top:981px;font-size:14px;color:#555">cm</div>
<svg style="left:1634px;top:979px" width="19" height="19" viewBox="0 0 24 24"><path fill="none" stroke="#222" stroke-width="2" d="M19.14 12.94c.04-.3.06-.61.06-.94s-.02-.64-.07-.94l2.03-1.58a.49.49 0 0 0 .12-.61l-1.92-3.32a.49.49 0 0 0-.59-.22l-2.39.96c-.5-.38-1.03-.7-1.62-.94l-.36-2.54a.48.48 0 0 0-.48-.41h-3.84c-.24 0-.43.17-.47.41l-.36 2.540c-.59.24-1.13.57-1.62.94l-2.39-.96a.48.48 0 0 0-.59.22L2.740 8.870a.47.47 0 0 0 .12.61l2.03 1.58c-.05.3-.09.63-.09.94s.02.64.07.94l-2.03 1.58a.49.49 0 0 0-.12.61l1.92 3.32c.12.22.37.29.59.22l2.39-.96c.5.38 1.03.7 1.62.94l.36 2.54c.05.24.24.41.48.41h3.84c.24 0 .44-.17.47-.41l.36-2.54c.59-.24 1.13-.56 1.62-.94l2.39.96c.22.08.47 0 .59-.22l1.92-3.32c.12-.22.07-.47-.12-.61l-2.01-1.58z"/><circle cx="12" cy="12" r="3.4" fill="none" stroke="#222" stroke-width="2"/></svg>
<div class="t" style="left:1661px;top:980px;font-size:14px;color:#444">プロパティモード</div>
</body></html>
